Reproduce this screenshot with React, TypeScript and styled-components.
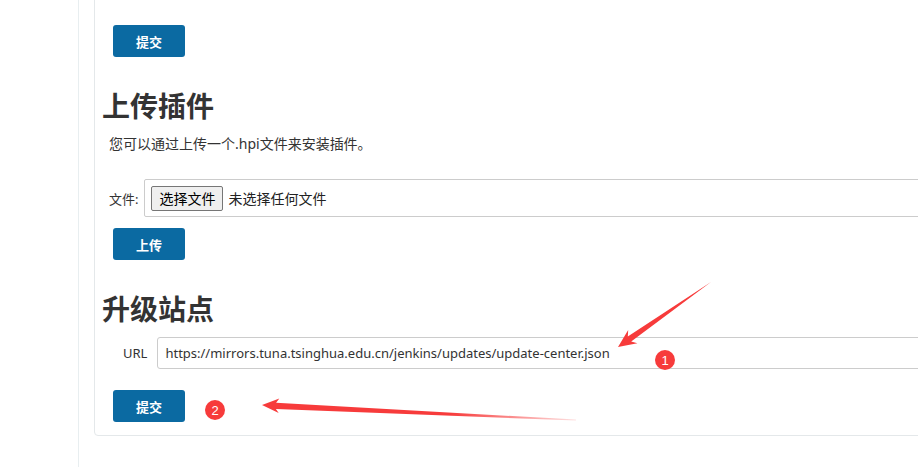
import React from "react";
import styled, { createGlobalStyle } from "styled-components";

const Global = createGlobalStyle`
  html, body { margin: 0; padding: 0; background: #fff; }
  body {
    font-family: "Noto Sans", "Noto Sans CJK SC", sans-serif;
    color: #333;
    overflow: hidden;
  }
`;

const Page = styled.div`
  position: relative;
  display: flex;
  width: 918px;
  height: 467px;
  overflow: hidden;
`;

const Side = styled.div`
  flex: 0 0 78px;
  border-right: 1px solid #e8eef0;
`;

const Main = styled.div`
  flex: 0 0 auto;
  margin-left: 15px;
`;

const Panel = styled.div`
  width: 1000px;
  margin-top: -10px;
  border: 1px solid #e4e8ea;
  border-radius: 4px;
  padding: 34px 0 13px 0;
  display: flex;
  flex-direction: column;
  align-items: flex-start;
`;

const Button = styled.button<{ $mt?: number }>`
  width: 72px;
  height: 32px;
  margin: ${(p) => p.$mt ?? 0}px 0 0 18px;
  background: #0b6aa2;
  color: #fff;
  border: none;
  border-radius: 3px;
  font-family: "Noto Sans CJK SC", sans-serif;
  font-weight: 700;
  font-size: 13px;
  padding: 0;
`;

const Heading = styled.h2<{ $mt: number }>`
  margin: ${(p) => p.$mt}px 0 0 7px;
  font-family: "Noto Sans CJK SC", sans-serif;
  font-size: 28px;
  line-height: 34px;
  font-weight: 700;
  color: #333;
`;

const Desc = styled.p`
  margin: 12px 0 0 14px;
  font-size: 14px;
  line-height: 20px;
`;

const Row = styled.div<{ $mt: number; $indent: number; $gap: number }>`
  align-self: stretch;
  display: flex;
  align-items: center;
  margin-top: ${(p) => p.$mt}px;
  padding-left: ${(p) => p.$indent}px;
  gap: ${(p) => p.$gap}px;
`;

const Label = styled.span`
  font-size: 13px;
  color: #333;
`;

const FileBox = styled.div`
  flex: 1;
  height: 38px;
  box-sizing: border-box;
  border: 1px solid #ccc;
  border-radius: 2px;
  display: flex;
  align-items: center;
  padding-left: 6px;
  gap: 5px;
`;

const ChooseBtn = styled.span`
  height: 25px;
  width: 72px;
  box-sizing: border-box;
  display: flex;
  align-items: center;
  justify-content: center;
  border: 1px solid #767676;
  border-radius: 2px;
  background: #efefef;
  font-size: 14px;
  color: #000;
`;

const NoFile = styled.span`
  font-size: 14px;
  color: #222;
`;

const UrlInput = styled.input`
  flex: 1;
  height: 32px;
  box-sizing: border-box;
  border: 1px solid #ccc;
  border-radius: 3px;
  padding: 0 7px;
  font-family: "Noto Sans", sans-serif;
  font-size: 13px;
  color: #333;
  outline: none;
`;

const Overlay = styled.svg`
  position: absolute;
  left: 0;
  top: 0;
  pointer-events: none;
`;

const RED = "#f73b3b";

export default function App() {
  return (
    <>
      <Global />
      <Page>
        <Side />
        <Main>
          <Panel>
            <Button>提交</Button>
            <Heading $mt={31}>上传插件</Heading>
            <Desc>您可以通过上传一个.hpi文件来安装插件。</Desc>
            <Row $mt={25} $indent={14} $gap={6}>
              <Label>文件:</Label>
              <FileBox>
                <ChooseBtn>选择文件</ChooseBtn>
                <NoFile>未选择任何文件</NoFile>
              </FileBox>
            </Row>
            <Button $mt={11}>上传</Button>
            <Heading $mt={31}>升级站点</Heading>
            <Row $mt={12} $indent={28} $gap={10}>
              <Label>URL</Label>
              <UrlInput
                readOnly
                value="https://mirrors.tuna.tsinghua.edu.cn/jenkins/updates/update-center.json"
              />
            </Row>
            <Button $mt={21}>提交</Button>
          </Panel>
        </Main>
        <Overlay width="918" height="467" viewBox="0 0 918 467">
          <defs>
            <linearGradient id="fade2" gradientUnits="userSpaceOnUse" x1="262" y1="0" x2="576" y2="0">
              <stop offset="0" stopColor={RED} />
              <stop offset="0.6" stopColor={RED} />
              <stop offset="1" stopColor={RED} stopOpacity="0.15" />
            </linearGradient>
          </defs>
          <polygon
            fill={RED}
            points="711,282 631.2,341.5 637.4,343.2 618,347 628.2,330 627.8,336.5"
          />
          <polygon
            fill="url(#fade2)"
            points="576,420.6 275.9,408.9 278.7,413 262,405 279.3,398.6 276.1,402.7 576,419.6"
          />
          <circle cx="665" cy="360" r="10" fill={RED} />
          <text x="665" y="364.5" textAnchor="middle" fill="#fff" fontSize="13" fontFamily="Liberation Sans, sans-serif">1</text>
          <circle cx="215" cy="410" r="10" fill={RED} />
          <text x="215" y="414.5" textAnchor="middle" fill="#fff" fontSize="13" fontFamily="Liberation Sans, sans-serif">2</text>
        </Overlay>
      </Page>
    </>
  );
}
